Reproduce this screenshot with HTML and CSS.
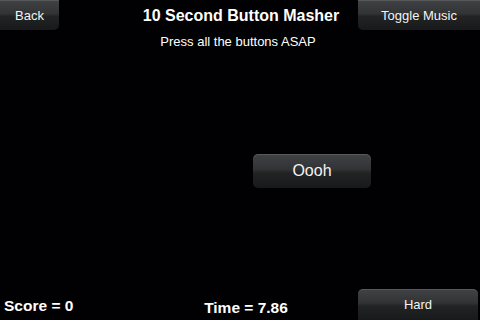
FILE: index.html
```html
<!DOCTYPE html>
<html lang="en">
	<head>
		<meta charset="UTF-8">
		<title>10 Second Button Masher</title>
		<link rel="stylesheet" href="styles.css">
	</head>
	<body>
		<div id="game">
			<div class="topbar">
				<button class="btn back">Back</button>
				<div class="heading">
					<div class="title">10 Second Button Masher</div>
					<div class="subtitle">Press all the buttons ASAP</div>
				</div>
				<button class="btn music">Toggle Music</button>
			</div>

			<div class="field">
				<button class="btn mash">Oooh</button>
			</div>

			<div class="bottombar">
				<div class="score">Score = 0</div>
				<div class="time">Time = 7.86</div>
				<button class="btn hard">Hard</button>
			</div>
		</div>
	</body>
</html>
```

FILE: styles.css
```css
body{
	margin:0;
	padding:0;
	background:#000;
}

#game{
	width:480px;
	height:320px;
	display:flex;
	flex-direction:column;
	background:#010103;
	color:#fff;
	font-family:"Liberation Sans", Arial, sans-serif;
	overflow:hidden;
}

.btn{
	border:0;
	padding:0;
	margin:0;
	color:#f4f4f4;
	font-family:"Liberation Sans", Arial, sans-serif;
	font-size:13px;
	border-radius:5px;
	background:linear-gradient(#404245 0%, #313335 45%, #222325 55%, #18191b 100%);
	box-shadow:inset 0 1px 0 rgba(255,255,255,0.12);
}

.topbar{
	display:grid;
	grid-template-columns:122px 1fr 122px;
	height:56px;
}
.back,
.music{
	height:30px;
}
.back{
	width:59px;
	border-radius:0 0 5px 0;
}
.music{
	border-radius:0 0 0 5px;
}

.heading{
	text-align:center;
	padding-top:6px;
}
.title{
	font-size:16px;
	font-weight:bold;
	line-height:20px;
	padding-left:2px;
}
.subtitle{
	font-size:13px;
	line-height:16px;
	margin-top:8px;
	padding-right:4px;
}

.field{
	flex:1;
	position:relative;
}
.mash{
	position:absolute;
	left:253px;
	top:98px;
	width:118px;
	height:34px;
	font-size:16px;
}

.bottombar{
	display:grid;
	grid-template-columns:120px 1fr 120px;
	align-items:end;
	height:31px;
	padding-right:2px;
}
.score,
.time{
	font-size:15.5px;
	font-weight:bold;
	line-height:20px;
	padding-bottom:4px;
}
.score{
	padding-left:4px;
}
.time{
	text-align:center;
	padding-left:14px;
	padding-bottom:2px;
}
.hard{
	height:31px;
	border-radius:5px 5px 0 0;
}
```
